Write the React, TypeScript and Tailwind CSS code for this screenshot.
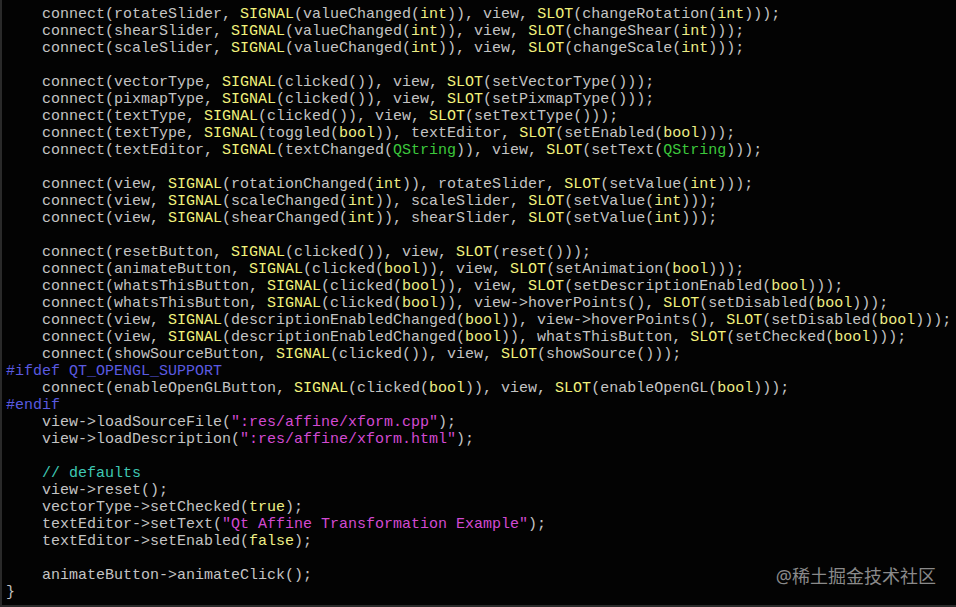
import React from "react";

const lines: string[] = [
  "    connect(rotateSlider, SIGNAL(valueChanged(int)), view, SLOT(changeRotation(int)));",
  "    connect(shearSlider, SIGNAL(valueChanged(int)), view, SLOT(changeShear(int)));",
  "    connect(scaleSlider, SIGNAL(valueChanged(int)), view, SLOT(changeScale(int)));",
  "",
  "    connect(vectorType, SIGNAL(clicked()), view, SLOT(setVectorType()));",
  "    connect(pixmapType, SIGNAL(clicked()), view, SLOT(setPixmapType()));",
  "    connect(textType, SIGNAL(clicked()), view, SLOT(setTextType()));",
  "    connect(textType, SIGNAL(toggled(bool)), textEditor, SLOT(setEnabled(bool)));",
  "    connect(textEditor, SIGNAL(textChanged(QString)), view, SLOT(setText(QString)));",
  "",
  "    connect(view, SIGNAL(rotationChanged(int)), rotateSlider, SLOT(setValue(int)));",
  "    connect(view, SIGNAL(scaleChanged(int)), scaleSlider, SLOT(setValue(int)));",
  "    connect(view, SIGNAL(shearChanged(int)), shearSlider, SLOT(setValue(int)));",
  "",
  "    connect(resetButton, SIGNAL(clicked()), view, SLOT(reset()));",
  "    connect(animateButton, SIGNAL(clicked(bool)), view, SLOT(setAnimation(bool)));",
  "    connect(whatsThisButton, SIGNAL(clicked(bool)), view, SLOT(setDescriptionEnabled(bool)));",
  "    connect(whatsThisButton, SIGNAL(clicked(bool)), view->hoverPoints(), SLOT(setDisabled(bool)));",
  "    connect(view, SIGNAL(descriptionEnabledChanged(bool)), view->hoverPoints(), SLOT(setDisabled(bool)));",
  "    connect(view, SIGNAL(descriptionEnabledChanged(bool)), whatsThisButton, SLOT(setChecked(bool)));",
  "    connect(showSourceButton, SIGNAL(clicked()), view, SLOT(showSource()));",
  "#ifdef QT_OPENGL_SUPPORT",
  "    connect(enableOpenGLButton, SIGNAL(clicked(bool)), view, SLOT(enableOpenGL(bool)));",
  "#endif",
  "    view->loadSourceFile(\":res/affine/xform.cpp\");",
  "    view->loadDescription(\":res/affine/xform.html\");",
  "",
  "    // defaults",
  "    view->reset();",
  "    vectorType->setChecked(true);",
  "    textEditor->setText(\"Qt Affine Transformation Example\");",
  "    textEditor->setEnabled(false);",
  "",
  "    animateButton->animateClick();",
  "}",
];

function renderLine(line: string, idx: number) {
  if (line.startsWith("#")) {
    return (
      <span key={idx} className="text-[#5a5ae0]">
        {line}
      </span>
    );
  }
  const ci = line.indexOf("//");
  if (ci >= 0) {
    return (
      <span key={idx}>
        {line.slice(0, ci)}
        <span className="text-[#3ec8b4]">{line.slice(ci)}</span>
      </span>
    );
  }
  const parts = line.split(/(SIGNAL|SLOT|\bint\b|\bbool\b|\btrue\b|\bfalse\b|QString|"[^"]*")/);
  return (
    <span key={idx}>
      {parts.map((p, i) => {
        if (p === "SIGNAL" || p === "SLOT")
          return (
            <span key={i} className="text-[#f2f27c]">
              {p}
            </span>
          );
        if (p === "int" || p === "bool" || p === "true" || p === "false")
          return (
            <span key={i} className="text-[#eeee86]">
              {p}
            </span>
          );
        if (p === "QString")
          return (
            <span key={i} className="text-[#3cc83c]">
              {p}
            </span>
          );
        if (p.startsWith('"'))
          return (
            <span key={i} className="text-[#d24ad2]">
              {p}
            </span>
          );
        return <React.Fragment key={i}>{p}</React.Fragment>;
      })}
    </span>
  );
}

export default function App() {
  return (
    <div className="relative w-[956px] h-[607px] overflow-hidden bg-[#030303] border-l-2 border-b-2 border-[#2a2a2a]">
      <pre
        className="m-0 pt-[6px] pl-[4px] text-[15px] leading-[17px] text-[#c4c4c4]"
        style={{ fontFamily: '"Liberation Mono", "Courier New", monospace' }}
      >
        {lines.map((l, i) => (
          <div key={i} className="h-[17px] whitespace-pre">
            {renderLine(l, i)}
          </div>
        ))}
      </pre>
      <div
        className="absolute right-[20px] bottom-[18px] text-[18px] leading-[22px] text-[#8a8a8a]"
        style={{ fontFamily: '"Noto Sans", "Noto Sans CJK SC", sans-serif' }}
      >
        @稀土掘金技术社区
      </div>
    </div>
  );
}
